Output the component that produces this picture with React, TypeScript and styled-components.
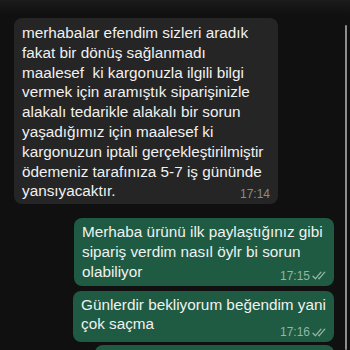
import styled, { createGlobalStyle } from 'styled-components';

const GlobalStyle = createGlobalStyle`
  html, body {
    margin: 0;
    padding: 0;
    background: #0f0f0f;
    overflow: hidden;
  }
`;

const Screen = styled.div`
  position: relative;
  width: 350px;
  height: 350px;
  overflow: hidden;
  background:
    linear-gradient(180deg, #1c1c1c 0px, #141414 9px, #101010 16px),
    #101010;
  font-family: 'Liberation Sans', Arial, sans-serif;
  display: flex;
  flex-direction: column;
  padding: 18px 16px 0 14px;
  box-sizing: border-box;
`;

const ScrollBar = styled.div`
  position: absolute;
  top: 25px;
  right: 3px;
  bottom: 0;
  width: 2px;
  border-radius: 1px;
  background: #8e8e8e;
`;

const Bubble = styled.div<{ $out?: boolean; $width: number; $gap: number; $top: number; $bottom: number }>`
  position: relative;
  box-sizing: border-box;
  flex-shrink: 0;
  width: ${(p) => p.$width}px;
  margin-top: ${(p) => p.$gap}px;
  align-self: ${(p) => (p.$out ? 'flex-end' : 'flex-start')};
  padding: ${(p) => p.$top}px 8px ${(p) => p.$bottom}px 8px;
  border-radius: 8px;
  background: ${(p) => (p.$out ? '#1e5b42' : '#252525')};
  color: #f1f1f1;
  font-size: 15.3px;
  line-height: 19.8px;
`;

const Line = styled.span`
  white-space: pre;
`;

const Meta = styled.div<{ $out?: boolean }>`
  position: absolute;
  right: 8px;
  bottom: 4px;
  display: flex;
  align-items: center;
  gap: 2px;
  font-size: 12px;
  line-height: 12px;
  color: ${(p) => (p.$out ? '#93b6a5' : '#8b8b8b')};
`;

function Ticks() {
  return (
    <svg width="14" height="9" viewBox="0 0 14 9" fill="none" stroke="#93b6a5" strokeWidth="1.3" strokeLinecap="round" strokeLinejoin="round">
      <path d="M1 5.2 L3.5 7.7 L9 1.2" />
      <path d="M6.6 7.1 L7.2 7.7 L12.8 1.2" />
    </svg>
  );
}

function Lines({ text }: { text: string[] }) {
  return (
    <>
      {text.map((t, i) => (
        <span key={i}>
          <Line>{t}</Line>
          {i < text.length - 1 && <br />}
        </span>
      ))}
    </>
  );
}

export default function App(): JSX.Element {
  return (
    <>
      <GlobalStyle />
      <Screen>
        <Bubble $width={264} $gap={0} $top={5} $bottom={3}>
          <Lines
            text={[
              'merhabalar efendim sizleri aradık',
              'fakat bir dönüş sağlanmadı',
              'maalesef  ki kargonuzla ilgili bilgi',
              'vermek için aramıştık siparişinizle',
              'alakalı tedarikle alakalı bir sorun',
              'yaşadığımız için maalesef ki',
              'kargonuzun iptali gerçekleştirilmiştir',
              'ödemeniz tarafınıza 5-7 iş gününde',
              'yansıyacaktır.',
            ]}
          />
          <Meta>17:14</Meta>
        </Bubble>
        <Bubble $out $width={260} $gap={14} $top={4} $bottom={4}>
          <Lines text={['Merhaba ürünü ilk paylaştığınız gibi', 'sipariş verdim nasıl öylr bi sorun', 'olabiliyor']} />
          <Meta $out>
            17:15
            <Ticks />
          </Meta>
        </Bubble>
        <Bubble $out $width={261} $gap={5} $top={4} $bottom={8}>
          <Lines text={['Günlerdir bekliyorum beğendim yani', 'çok saçma']} />
          <Meta $out>
            17:16
            <Ticks />
          </Meta>
        </Bubble>
        <Bubble $out $width={239} $gap={3} $top={4} $bottom={40} />
        <ScrollBar />
      </Screen>
    </>
  );
}
